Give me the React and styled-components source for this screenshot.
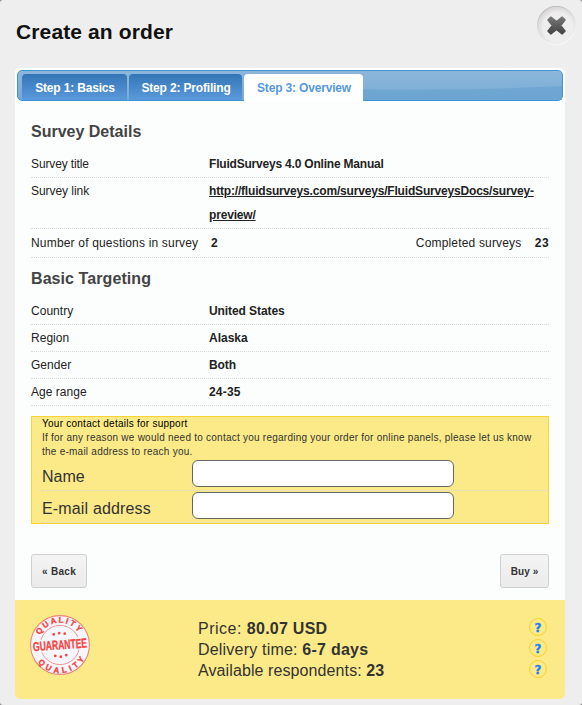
import React from "react";
import styled, { createGlobalStyle } from "styled-components";

const GlobalStyle = createGlobalStyle`
  * { box-sizing: border-box; }
  body {
    margin: 0;
    background: #8a8a8a;
    font-family: "Liberation Sans", Arial, sans-serif;
    color: #222;
  }
`;

const Dialog = styled.div`
  width: 582px;
  height: 705px;
  padding: 0 17px 0 15px;
  background: #eee;
  border-radius: 3px;
  overflow: hidden;
`;

const Header = styled.header`
  display: flex;
  justify-content: space-between;
  height: 68px;
  padding: 6px 0 0 1px;
  margin-right: -12px;
`;

const Title = styled.h1`
  margin: 14px 0 0;
  font-size: 21px;
  line-height: 24px;
  letter-spacing: 0.12px;
  color: #111;
`;

const CloseButton = styled.button`
  width: 41px;
  height: 41px;
  padding: 0;
  border: 0;
  background: none;
`;

const Panel = styled.main`
  height: 631px;
  display: flex;
  flex-direction: column;
  background: #fcfefe;
  border-radius: 5px;
  overflow: hidden;
`;

const TabFrame = styled.div`
  padding: 2px 2px 0;
  background: #fff;
`;

const TabBar = styled.nav`
  display: grid;
  grid-template-columns: 105px 113px 119px 1fr;
  column-gap: 2px;
  height: 31px;
  padding: 3px 0 0 4px;
  border: 1px solid #3f94d5;
  border-radius: 5px;
  background: linear-gradient(#8cb6db, #80b0d8 60%, #74aad5);
`;

const Tab = styled.div`
  height: ${(p) => (p.$active ? 27 : 26)}px;
  padding-left: 1px;
  border-radius: 4px 4px 0 0;
  background: ${(p) => (p.$active ? "#fff" : "linear-gradient(#3475b6, #5b9adc)")};
  color: ${(p) => (p.$active ? "#5499dc" : "#fff")};
  font-size: 12px;
  font-weight: bold;
  line-height: 28px;
  text-align: center;
  letter-spacing: -0.17px;
  white-space: nowrap;
`;

const Wave = styled.svg`
  display: block;
  width: 199px;
  height: 26px;
  margin-left: -2px;
`;

const Content = styled.div`
  height: 499px;
  padding: 0 16px;
`;

const Heading = styled.h2`
  height: ${(p) => p.$height}px;
  margin: 0;
  padding-top: ${(p) => p.$top}px;
  font-size: 16px;
  line-height: 20px;
  letter-spacing: ${(p) => p.$track || 0}px;
  color: #444;
`;

const Row = styled.div`
  display: flex;
  padding: ${(p) => (p.$roomy ? 2 : 1)}px 0;
  border-bottom: 1px dotted #d8dbdb;
  font-size: 12px;
  line-height: 24px;
`;

const Label = styled.span`
  width: ${(p) => p.$width || 178}px;
  flex: none;
  white-space: nowrap;
  letter-spacing: ${(p) => p.$track || 0}px;
`;

const Value = styled.strong`
  letter-spacing: ${(p) => p.$track || 0}px;
`;

const Link = styled.a`
  display: inline-block;
  width: 335px;
  font-weight: bold;
  color: #222;
  text-decoration: underline;
  letter-spacing: -0.18px;
`;

const Completed = styled.div`
  display: flex;
  margin-left: auto;
`;

const ContactBox = styled.section`
  height: 108px;
  margin-top: 10px;
  padding: 0 0 0 10px;
  border: 1px solid #fad233;
  background: #fbea87;
`;

const ContactTitle = styled.div`
  font-size: 10px;
  line-height: 14px;
  letter-spacing: 0.25px;
  color: #000;
`;

const ContactNote = styled.p`
  margin: 0;
  font-size: 10px;
  line-height: 14px;
  letter-spacing: 0.24px;
  color: #333;
  white-space: nowrap;
`;

const Field = styled.label`
  display: flex;
  height: 32px;
  padding-top: 1px;
  border-bottom: 1px dotted #d6d6e2;
`;

const FieldName = styled.span`
  width: 150px;
  padding-top: 8px;
  font-size: 16px;
  line-height: 18px;
  letter-spacing: ${(p) => p.$track || 0}px;
  color: #333;
`;

const Input = styled.input`
  width: 262px;
  height: 27px;
  border: 1px solid #666;
  border-radius: 6px;
  background: #fff;
  outline: 0;
`;

const Actions = styled.div`
  display: flex;
  justify-content: space-between;
  margin-top: 30px;
`;

const Button = styled.button`
  width: ${(p) => p.$width}px;
  height: 34px;
  padding: 2px 0 0;
  border: 1px solid #d0d0d0;
  border-radius: 3px;
  background: linear-gradient(#f4f4f4, #ebebeb);
  font: bold 10px/30px "Liberation Sans", Arial, sans-serif;
  letter-spacing: ${(p) => p.$track || 0}px;
  color: #333;
`;

const Footer = styled.footer`
  flex: 1;
  display: flex;
  padding: 14px 16px 0 14px;
  background: #fbea87;
`;

const SealSvg = styled.svg`
  flex: none;
  width: 62px;
  height: 62px;
  overflow: visible;
  font-family: "Liberation Sans", Arial, sans-serif;
  font-weight: bold;
  fill: #f5443f;
`;

const Summary = styled.div`
  flex: 1;
  margin-left: 107px;
  padding-top: 4px;
  color: #333;
`;

const SummaryLine = styled.div`
  height: 21px;
  font-size: 16px;
  line-height: 21px;
  letter-spacing: ${(p) => p.$track || 0}px;
`;

const HelpList = styled.div`
  display: flex;
  flex-direction: column;
  gap: 3px;
  padding: 4px 2px 0 0;
`;

const Help = styled.span`
  width: 18px;
  height: 18px;
  border: 1px solid #fad02c;
  border-radius: 50%;
  font: bold 12px/18px "DejaVu Sans", sans-serif;
  text-align: center;
  color: #2080f4;
  -webkit-text-stroke: 0.3px #2080f4;
`;

const CloseIcon = () => (
  <svg width="41" height="41" viewBox="0 0 41 41">
    <defs>
      <linearGradient id="well" x1="0" y1="0" x2="0.4" y2="1">
        <stop offset="0" stopColor="#b4b2b2" />
        <stop offset="0.55" stopColor="#dedede" />
        <stop offset="1" stopColor="#f8f8f8" />
      </linearGradient>
      <radialGradient id="disc" cx="0.54" cy="0.56" r="0.54">
        <stop offset="0.72" stopColor="#efeeee" />
        <stop offset="1" stopColor="#d9d7d7" />
      </radialGradient>
      <linearGradient id="cross" x1="0" y1="11" x2="0" y2="28" gradientUnits="userSpaceOnUse">
        <stop offset="0" stopColor="#777" />
        <stop offset="1" stopColor="#444" />
      </linearGradient>
    </defs>
    <circle cx="20.5" cy="19.5" r="19" fill="url(#disc)" stroke="url(#well)" strokeWidth="1.2" />
    <path
      d="M14.8 11.2L20.5 15.6L26.2 11.2L28.9 13.9L24.6 19.5L28.9 25.1L26.2 27.8L20.5 23.4L14.8 27.8L12.1 25.1L16.4 19.5L12.1 13.9Z"
      fill="url(#cross)" stroke="url(#cross)" strokeWidth="1.6" strokeLinejoin="round"
    />
  </svg>
);

const Seal = () => (
  <SealSvg viewBox="0 0 62 62">
    <defs>
      <path id="sealTop" d="M8.7 31A22.3 22.3 0 0 1 53.3 31" />
      <path id="sealBottom" d="M2.9 31A28.1 28.1 0 0 0 59.1 31" />
    </defs>
    <circle cx="31" cy="31" r="29.4" fill="#f5f7fc" stroke="#f38078" strokeWidth="1.1" />
    <circle cx="31" cy="31" r="19.6" fill="none" stroke="#f38a86" strokeWidth="0.9" />
    <g transform="rotate(-4 31 31)">
      <rect x="3" y="24.5" width="56" height="12.5" fill="#f5f7fc" />
      <g stroke="#f5443f" strokeWidth="0.35">
        <text x="4" y="35.3" fontSize="13" textLength="54" lengthAdjust="spacingAndGlyphs">GUARANTEE</text>
        <text fontSize="8"><textPath href="#sealTop" startOffset="50%" textAnchor="middle" textLength="46">QUALITY</textPath></text>
        <text fontSize="8"><textPath href="#sealBottom" startOffset="50%" textAnchor="middle" textLength="55">QUALITY</textPath></text>
      </g>
      <circle cx="25.5" cy="20" r="1.4" /><circle cx="31" cy="19" r="1.4" /><circle cx="36.5" cy="20" r="1.4" />
      <circle cx="25.5" cy="41.6" r="1.4" /><circle cx="31" cy="42.8" r="1.4" /><circle cx="36.5" cy="41.6" r="1.4" />
    </g>
  </SealSvg>
);

const targeting = [
  ["Country", "United States", -0.08],
  ["Region", "Alaska", 0],
  ["Gender", "Both", -0.1],
  ["Age range", "24-35", 0.2],
];

export default function App() {
  return (
    <Dialog>
      <GlobalStyle />
      <Header>
        <Title>Create an order</Title>
        <CloseButton aria-label="Close"><CloseIcon /></CloseButton>
      </Header>
      <Panel>
        <TabFrame>
          <TabBar>
            <Tab>Step 1: Basics</Tab>
            <Tab>Step 2: Profiling</Tab>
            <Tab $active>Step 3: Overview</Tab>
            <Wave viewBox="0 0 199 26" preserveAspectRatio="none">
              <path d="M0 15.5Q100 17 199 12V26H0Z" fill="#6aa3d0" opacity="0.75" />
            </Wave>
          </TabBar>
        </TabFrame>
        <Content>
          <Heading $height={50} $top={21}>Survey Details</Heading>
          <Row>
            <Label $track={-0.12}>Survey title</Label>
            <Value $track={-0.2}>FluidSurveys 4.0 Online Manual</Value>
          </Row>
          <Row>
            <Label $track={-0.05}>Survey link</Label>
            <Link>http://fluidsurveys.com/surveys/FluidSurveysDocs/survey-preview/</Link>
          </Row>
          <Row $roomy>
            <Label $width={180} $track={0.18}>Number of questions in survey</Label>
            <Value>2</Value>
            <Completed>
              <Label $width={119} $track={0.17}>Completed surveys</Label>
              <Value $track={0.4}>23</Value>
            </Completed>
          </Row>
          <Heading $height={40} $top={11} $track={0.08}>Basic Targeting</Heading>
          {targeting.map(([name, value, track]) => (
            <Row key={name}><Label $track={0.03}>{name}</Label><Value $track={track}>{value}</Value></Row>
          ))}
          <ContactBox>
            <ContactTitle>Your contact details for support</ContactTitle>
            <ContactNote>
              If for any reason we would need to contact you regarding your order for online panels, please let us know
              <br />
              the e-mail address to reach you.
            </ContactNote>
            <Field><FieldName>Name</FieldName><Input type="text" /></Field>
            <Field><FieldName $track={0.16}>E-mail address</FieldName><Input type="text" /></Field>
          </ContactBox>
          <Actions>
            <Button $width={56} $track={0.3}>« Back</Button>
            <Button $width={49} $track={0.1}>Buy »</Button>
          </Actions>
        </Content>
        <Footer>
          <Seal />
          <Summary>
            <SummaryLine $track={0.5}>Price: <Value $track={0.25}>80.07 USD</Value></SummaryLine>
            <SummaryLine $track={0.2}>Delivery time: <Value $track={0.25}>6-7 days</Value></SummaryLine>
            <SummaryLine $track={0.1}>Available respondents: <Value>23</Value></SummaryLine>
          </Summary>
          <HelpList><Help>?</Help><Help>?</Help><Help>?</Help></HelpList>
        </Footer>
      </Panel>
    </Dialog>
  );
}
